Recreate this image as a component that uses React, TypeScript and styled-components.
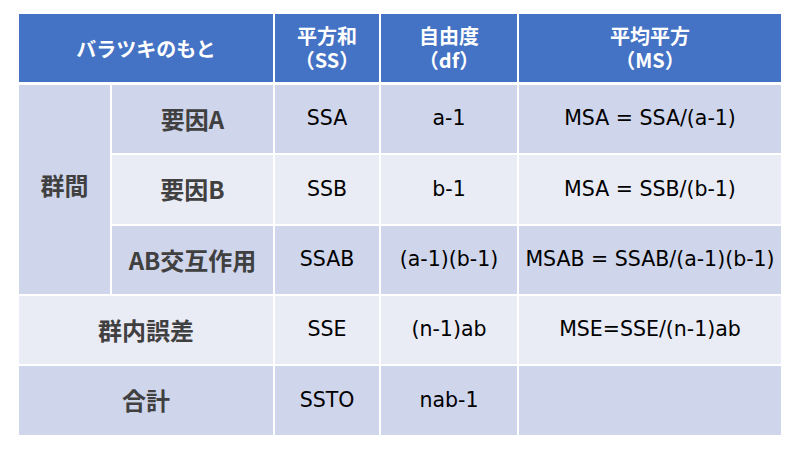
import styled, { createGlobalStyle } from "styled-components";

const GlobalStyle = createGlobalStyle`
  html, body {
    margin: 0;
    padding: 0;
    background: #ffffff;
  }
`;

const Page = styled.div`
  width: 800px;
  height: 450px;
  padding: 14px 19px 0;
  box-sizing: border-box;
`;

const Grid = styled.div`
  display: grid;
  grid-template-columns: 91px 161px 104px 136px 262px;
  grid-template-rows: 69px 68px 69px 68px 68px 69px;
  column-gap: 2px;
  row-gap: 2px;
  background: #ffffff;
  width: 762px;
`;

const Head = styled.div<{ span?: number }>`
  grid-column: span ${(p) => p.span ?? 1};
  background: #4472c4;
  color: #ffffff;
  font-family: "Noto Sans CJK JP", "Noto Sans", sans-serif;
  font-weight: 700;
  font-size: 20px;
  display: flex;
  flex-direction: column;
  align-items: center;
  justify-content: center;
  text-align: center;
  margin-bottom: 1px;
`;

const HeadLine = styled.span`
  display: block;
  height: 24px;
  line-height: 24px;
`;

const Label = styled.div<{ dark?: boolean; span?: number; rows?: number }>`
  grid-column: span ${(p) => p.span ?? 1};
  grid-row: span ${(p) => p.rows ?? 1};
  background: ${(p) => (p.dark ? "#cfd5ea" : "#e9ebf5")};
  color: #404040;
  font-family: "Noto Sans CJK JP", "Noto Sans", sans-serif;
  font-weight: 700;
  font-size: 24px;
  display: flex;
  align-items: center;
  justify-content: center;
  padding-bottom: ${(p) => ((p.rows ?? 1) > 1 ? 10 : 2)}px;
`;

const Cell = styled.div<{ dark?: boolean }>`
  background: ${(p) => (p.dark ? "#cfd5ea" : "#e9ebf5")};
  color: #000000;
  font-family: "DejaVu Sans", Verdana, sans-serif;
  font-size: 20.5px;
  display: flex;
  align-items: center;
  justify-content: center;
  white-space: nowrap;
  padding-bottom: 2px;
`;

type Row = { label?: string; ss: string; df: string; ms: string };

const factorRows: Row[] = [
  { label: "要因A", ss: "SSA", df: "a-1", ms: "MSA = SSA/(a-1)" },
  { label: "要因B", ss: "SSB", df: "b-1", ms: "MSA = SSB/(b-1)" },
  { label: "AB交互作用", ss: "SSAB", df: "(a-1)(b-1)", ms: "MSAB = SSAB/(a-1)(b-1)" },
];

export default function App() {
  return (
    <Page>
      <GlobalStyle />
      <Grid>
        <Head span={2}>バラツキのもと</Head>
        <Head>
          <HeadLine>平方和</HeadLine>
          <HeadLine>（SS）</HeadLine>
        </Head>
        <Head>
          <HeadLine>自由度</HeadLine>
          <HeadLine>（df）</HeadLine>
        </Head>
        <Head>
          <HeadLine>平均平方</HeadLine>
          <HeadLine>（MS）</HeadLine>
        </Head>

        <Label dark rows={3}>群間</Label>
        {factorRows.map((r, i) => {
          const dark = i % 2 === 0;
          return [
            <Label key={r.label} dark={dark}>{r.label}</Label>,
            <Cell key={r.ss} dark={dark}>{r.ss}</Cell>,
            <Cell key={r.df} dark={dark}>{r.df}</Cell>,
            <Cell key={r.ms} dark={dark}>{r.ms}</Cell>,
          ];
        })}

        <Label span={2}>群内誤差</Label>
        <Cell>SSE</Cell>
        <Cell>(n-1)ab</Cell>
        <Cell>MSE=SSE/(n-1)ab</Cell>

        <Label dark span={2}>合計</Label>
        <Cell dark>SSTO</Cell>
        <Cell dark>nab-1</Cell>
        <Cell dark />
      </Grid>
    </Page>
  );
}
